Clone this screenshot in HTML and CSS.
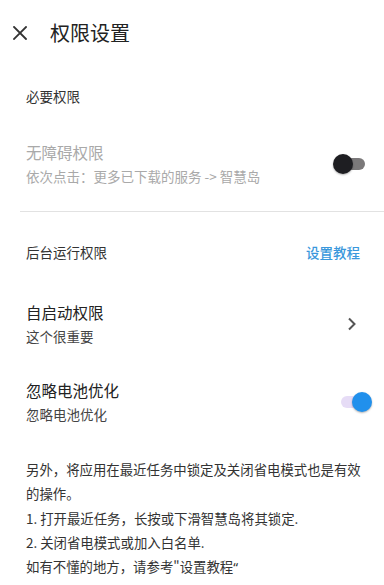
FILE: index.html
```html
<!DOCTYPE html>
<html lang="zh-CN">
<head>
<meta charset="utf-8">
<title>权限设置</title>
<link rel="stylesheet" href="styles.css">
</head>
<body>
<div class="page">
  <header class="topbar">
    <svg class="close" width="14" height="14" viewBox="0 0 14 14" aria-hidden="true">
      <path d="M1 1 L13 13 M13 1 L1 13" stroke="#333" stroke-width="1.8" fill="none" stroke-linecap="square"/>
    </svg>
    <h1 class="title">权限设置</h1>
  </header>

  <div class="section-label first">必要权限</div>

  <div class="row row-access">
    <div class="texts">
      <div class="row-title disabled">无障碍权限</div>
      <div class="row-sub disabled">依次点击：更多已下载的服务 -&gt; 智慧岛</div>
    </div>
    <div class="switch off"><span class="track"></span><span class="thumb"></span></div>
  </div>

  <div class="divider"></div>

  <div class="section-label split">
    <span>后台运行权限</span>
    <span class="link">设置教程</span>
  </div>

  <div class="row row-auto">
    <div class="texts">
      <div class="row-title">自启动权限</div>
      <div class="row-sub">这个很重要</div>
    </div>
    <svg class="chevron" width="10" height="14" viewBox="0 0 10 14" aria-hidden="true">
      <path d="M2 1.5 L7.5 7 L2 12.5" stroke="#555" stroke-width="2" fill="none"/>
    </svg>
  </div>

  <div class="row row-battery">
    <div class="texts">
      <div class="row-title">忽略电池优化</div>
      <div class="row-sub">忽略电池优化</div>
    </div>
    <div class="switch on"><span class="track"></span><span class="thumb"></span></div>
  </div>

  <div class="note">
    另外，将应用在最近任务中锁定及关闭省电模式也是有效的操作。<br>
    1. 打开最近任务，长按或下滑智慧岛将其锁定.<br>
    2. 关闭省电模式或加入白名单.<br>
    如有不懂的地方，请参考"设置教程<span class="latin">“</span>
  </div>
</div>
</body>
</html>
```

FILE: styles.css
```css
* { box-sizing: border-box; }
html, body {
  margin: 0;
  padding: 0;
  background: #fff;
}
body {
  font-family: "Noto Sans CJK SC", "Noto Sans", sans-serif;
  color: #333;
  width: 384px;
  height: 585px;
  overflow: hidden;
}
.topbar {
  height: 65px;
  display: flex;
  align-items: center;
  padding-left: 13px;
}
.close { display: block; }
.title {
  margin: 0 0 0 23px;
  font-size: 20px;
  font-weight: 400;
  line-height: 28px;
  color: #222;
}
.section-label {
  font-size: 13.5px;
  line-height: 20px;
  color: #333;
  padding: 0 24px 0 26px;
}
.section-label.first { margin-top: 21px; }
.section-label.split {
  display: flex;
  justify-content: space-between;
  margin-top: 30px;
}
.link {
  color: #3a98dc;
  font-weight: 500;
}
.row {
  display: flex;
  align-items: center;
  justify-content: space-between;
  padding: 0 12px 0 26px;
}
.row-access { margin-top: 35px; }
.row-auto { margin-top: 39px; padding-right: 27px; }
.row-battery { margin-top: 33px; }
.row-title {
  font-size: 15.5px;
  line-height: 22px;
  color: #222;
}
.row-sub {
  font-size: 13.5px;
  line-height: 20px;
  color: #444;
  margin-top: 3px;
}
.row-title.disabled, .row-sub.disabled { color: #a9a9a9; }
.chevron { display: block; }
.switch {
  position: relative;
  width: 39px;
  height: 20px;
}
.switch .track {
  position: absolute;
  left: 8px;
  top: 4px;
  width: 24px;
  height: 12px;
  border-radius: 6px;
}
.switch .thumb {
  position: absolute;
  top: 0;
  width: 20px;
  height: 20px;
  border-radius: 50%;
  box-shadow: 0 1px 2px rgba(0,0,0,0.3);
}
.switch.off .track { background: #7b797a; }
.switch.off .thumb { left: 0; background: #1e1e22; }
.switch.on .track { background: #e6dcf6; }
.switch.on .thumb { left: 19px; background: #2190ec; }
.divider {
  height: 1px;
  background: #e2e2e2;
  margin: 25px 0 0 20px;
}
.note {
  margin-top: 33px;
  padding: 0 18px 0 26px;
  font-size: 13.4px;
  line-height: 24.3px;
  color: #333;
}
.latin { font-family: "Noto Sans", sans-serif; }
```
